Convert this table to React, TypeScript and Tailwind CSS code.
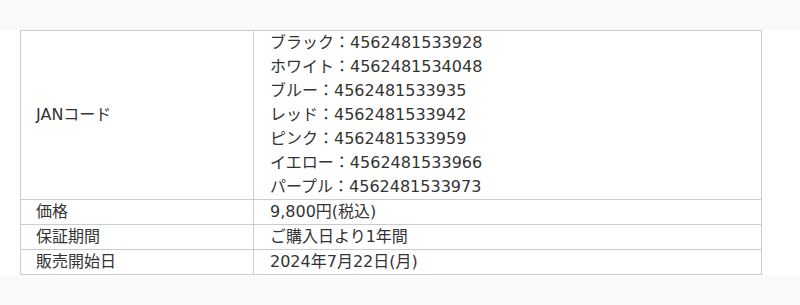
const janCodes = [
  'ブラック：4562481533928',
  'ホワイト：4562481534048',
  'ブルー：4562481533935',
  'レッド：4562481533942',
  'ピンク：4562481533959',
  'イエロー：4562481533966',
  'パープル：4562481533973',
];

const rows = [
  { label: '価格', value: '9,800円(税込)' },
  { label: '保証期間', value: 'ご購入日より1年間' },
  { label: '販売開始日', value: '2024年7月22日(月)' },
];

export default function App() {
  return (
    <div
      className="w-[800px] h-[305px] bg-[#f9f9f9] text-[#333] text-[16px] leading-6"
      style={{ fontFamily: '"DejaVu Sans", "Noto Sans CJK JP", sans-serif' }}
    >
      <div className="h-[30px]" />
      <div className="bg-white pl-5 pb-[1px]">
        <table className="w-[742px] border-collapse border border-[#cccccc]">
          <tbody>
            <tr>
              <td className="w-[233px] border border-[#cccccc] pl-[15px] align-middle">JANコード</td>
              <td className="border border-[#cccccc] pl-4">
                {janCodes.map((code) => (
                  <div key={code}>{code}</div>
                ))}
              </td>
            </tr>
            {rows.map((row) => (
              <tr key={row.label}>
                <td className="border border-[#cccccc] pl-[15px]">{row.label}</td>
                <td className="border border-[#cccccc] pl-4">{row.value}</td>
              </tr>
            ))}
          </tbody>
        </table>
      </div>
    </div>
  );
}
